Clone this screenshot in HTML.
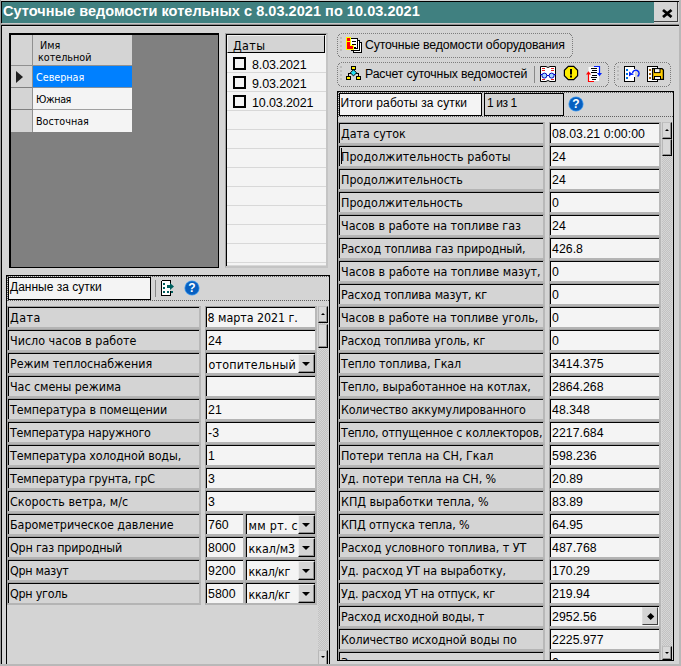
<!DOCTYPE html>
<html lang="ru"><head><meta charset="utf-8"><title>Суточные ведомости котельных</title>
<style>
html,body{margin:0;padding:0;background:#d4d4d4;}
body{width:681px;height:666px;overflow:hidden;}
#win{position:relative;width:681px;height:666px;overflow:hidden;background:#d4d4d4;font-family:"Liberation Sans",sans-serif;font-size:12px;color:#000;}
#win div,#win i,#win b,#win span,#win svg{position:absolute;box-sizing:border-box;}
#win span{white-space:nowrap;}
.ln{background:#000;}
/* title */
#title{left:2px;top:2px;width:652px;height:21px;background:#408080;}
#title span{left:1px;top:1px;font-weight:bold;font-size:14.5px;letter-spacing:0.04px;color:#fff;line-height:17px;}
#close{left:654px;top:2px;width:24px;height:20px;background:#d4d4d4;border-right:1px solid #404040;border-bottom:1px solid #404040;}
/* grid */
#grid{left:9px;top:33px;width:210px;height:235px;background:#808080;border:1px solid #000;border-left-width:2px;border-top-width:2px;}
.gh{background:#d4d4d4;}
.gc{background:#f4f4f4;}
.gc span,.gh span{font-family:"DejaVu Sans Condensed","Liberation Sans",sans-serif;font-size:10.7px;line-height:13px;}
/* dates list */
#dhead{background:#d4d4d4;border-top:1px solid #f0f0f0;border-left:1px solid #f0f0f0;border-right:1px solid #000;border-bottom:1px solid #000;}
#dhead span{left:5px;top:2px;letter-spacing:0.4px;font-family:"DejaVu Sans Condensed","Liberation Sans",sans-serif;font-size:12.4px;line-height:15px;}
.drow{border-bottom:1px solid #d8d8d8;}
.drow span{left:25px;top:4px;font-size:12.5px;letter-spacing:-0.12px;line-height:15px;}
.cb{left:6px;top:3px;width:13px;height:13px;border:2px solid #000;background:#f4f4f4;}
/* label / value cells */
.lab{height:23px;background:#d4d4d4;border-top:1px solid #a0a0a0;border-left:1px solid #a0a0a0;border-bottom:2px solid #b4b4b4;border-right:2px solid #b8b8b8;box-shadow:inset 1px 1px 0 #000;}
.lab span{left:2px;top:3px;line-height:15px;font-family:"DejaVu Sans Condensed","Liberation Sans",sans-serif;font-size:12.4px;}
.val{height:23px;background:#f4f4f4;border-top:1px solid #a0a0a0;border-left:1px solid #a0a0a0;border-bottom:2px solid #b4b4b4;border-right:2px solid #b8b8b8;box-shadow:inset 1px 1px 0 #000;}
.val span{left:2px;top:4px;line-height:15px;font-size:12.3px;letter-spacing:0.04px;}
.val span.c{top:4px;left:3px;letter-spacing:0;font-family:"DejaVu Sans Condensed","Liberation Sans",sans-serif;font-size:12.4px;}
.dd{right:0;top:1px;bottom:0;width:17px;background:#d4d4d4;border-top:1px solid #ececec;border-left:1px solid #ececec;border-right:1px solid #000;border-bottom:1px solid #000;box-shadow:inset -1px -1px 0 #909090;}
.dd b{left:3px;top:6.5px;width:0;height:0;border-left:4px solid transparent;border-right:4px solid transparent;border-top:4.5px solid #000;}
.dia{right:1px;top:1px;width:16px;height:18px;background:#d4d4d4;border-top:1px solid #dcdcdc;border-left:1px solid #dcdcdc;border-right:1px solid #404040;border-bottom:1px solid #404040;}
.dia b{left:4.7px;top:5.8px;width:5.4px;height:5.4px;background:#000;transform:rotate(45deg);}
/* toolbars */
.tb{border:1px dotted #a0a0a0;}
.tbt{font-size:12.3px;line-height:15px;letter-spacing:-0.15px;}
/* scrollbars */
.sb{background:repeating-conic-gradient(#c2c2c2 0% 25%,#d6d6d6 0% 50%) 0 0/2px 2px;}
.sbtn{background:#d8d8d8;border-top:1px solid #c0c0c0;border-left:1px solid #b8b8b8;border-right:1px solid #000;border-bottom:1px solid #000;box-shadow:inset -1px -1px 0 #909090;}
.sbtn b{left:2px;width:0;height:0;border-left:2px solid transparent;border-right:2px solid transparent;}
.sbtn b.up{top:6px;border-bottom:2.5px solid #000;}
.sbtn b.dn{top:6px;border-top:2.5px solid #000;}
.tx{height:23px;background:#f4f4f4;border:1px solid #000;}
.tx span{left:1px;top:2px;line-height:15px;font-size:12px;}
.val span.d{left:1.5px;top:3px;letter-spacing:-0.05px;}

</style></head><body>
<div id="win">
<!-- outer frame -->
<div class="ln" style="left:0;top:0;width:1px;height:666px;background:#a0a0a0"></div>
<div class="ln" style="left:1px;top:1px;width:678px;height:1px"></div>
<div class="ln" style="left:1px;top:1px;width:1px;height:663px"></div>
<div class="ln" style="left:2px;top:23px;width:677px;height:1px;background:#c8c8c8"></div>
<div class="ln" style="left:1px;top:23px;width:1px;height:2px;background:#a0a0a0"></div>
<div class="ln" style="left:2px;top:24px;width:677px;height:1px;background:#909090"></div>
<div class="ln" style="left:2px;top:26px;width:677px;height:1px;background:#dedede"></div>
<div class="ln" style="left:2px;top:25px;width:677px;height:1px"></div>
<div class="ln" style="left:679px;top:0;width:2px;height:666px;background:#b8b8b8"></div>
<div class="ln" style="left:0;top:664px;width:681px;height:2px;background:#b8b8b8"></div>
<div id="title"><span>Суточные ведомости котельных с 8.03.2021 по 10.03.2021</span></div>
<div id="close"><svg style="left:7px;top:6px" width="13" height="10" viewBox="0 0 13 10"><path d="M2 2 L10.500 9 M10.500 2 L2 9" stroke="#000" stroke-width="2.800" fill="none"/></svg></div>

<!-- left inner frame -->
<div class="ln" style="left:6px;top:275px;width:1px;height:389px"></div>
<div class="ln" style="left:6px;top:275px;width:324px;height:1px"></div>
<div class="ln" style="left:329px;top:275px;width:1px;height:389px"></div>

<!-- grid -->
<div id="grid">
 <div class="gh" style="left:0;top:0;width:22px;height:31px;border-right:1px solid #909090;border-bottom:1px solid #909090"></div>
 <div class="gh" style="left:22px;top:0;width:99px;height:31px;border-bottom:1px solid #909090"><span style="left:7px;top:4px">Имя</span><span style="left:5px;top:16px">котельной</span></div>
 <div class="gh" style="left:0;top:31px;width:22px;height:22px;border-right:1px solid #909090;border-bottom:1px solid #808080"><b style="left:5px;top:5px;width:0;height:0;border-top:6px solid transparent;border-bottom:6px solid transparent;border-left:7px solid #202020"></b></div>
 <div class="gc" style="left:22px;top:31px;width:99px;height:22px;background:#0080ff;border-bottom:1px solid #8090a0"><span style="left:3px;top:5px;color:#fff">Северная</span></div>
 <div class="gh" style="left:0;top:53px;width:22px;height:22px;border-right:1px solid #909090;border-bottom:1px solid #808080"></div>
 <div class="gc" style="left:22px;top:53px;width:99px;height:22px;border-bottom:1px solid #a0a0a0"><span style="left:3px;top:5px;letter-spacing:-0.4px">Южная</span></div>
 <div class="gh" style="left:0;top:75px;width:22px;height:22px;border-right:1px solid #909090;"></div>
 <div class="gc" style="left:22px;top:75px;width:99px;height:22px;"><span style="left:3px;top:5px">Восточная</span></div>
</div>

<!-- dates -->
<div style="left:225px;top:33px;width:103px;height:235px;background:#f4f4f4;border-left:1px solid #a0a0a0;border-top:1px solid #a0a0a0;border-right:2px solid #c4c4c4;border-bottom:2px solid #c4c4c4"></div>
<div class="ln" style="left:226px;top:34px;width:100px;height:1px"></div>
<div class="ln" style="left:226px;top:34px;width:1px;height:232px"></div>
<div id="dhead" style="left:227px;top:35px;width:98px;height:18px"><span>Даты</span></div>
<div class="drow" style="left:227px;top:54px;width:99px;height:19px"><i class="cb"></i><span>8.03.2021</span></div>
<div class="drow" style="left:227px;top:73px;width:99px;height:19px"><i class="cb"></i><span>9.03.2021</span></div>
<div class="drow" style="left:227px;top:92px;width:99px;height:19px"><i class="cb"></i><span>10.03.2021</span></div>
<div class="drow" style="left:227px;top:111px;width:99px;height:19px"></div>
<div class="drow" style="left:227px;top:130px;width:99px;height:19px"></div>
<div class="drow" style="left:227px;top:149px;width:99px;height:19px"></div>
<div class="drow" style="left:227px;top:168px;width:99px;height:19px"></div>
<div class="drow" style="left:227px;top:187px;width:99px;height:19px"></div>
<div class="drow" style="left:227px;top:206px;width:99px;height:19px"></div>
<div class="drow" style="left:227px;top:225px;width:99px;height:19px"></div>
<div class="drow" style="left:227px;top:244px;width:99px;height:19px"></div>
<div class="drow" style="left:227px;top:263px;width:99px;height:3px"></div>

<!-- left toolbar strip -->
<div class="tb" style="left:7px;top:276px;width:322px;height:25px;border-color:#606060;border-right:none"></div>
<div class="tx" style="left:8px;top:277px;width:143px;"><span>Данные за сутки</span></div>
<div class="ln" style="left:155px;top:280px;width:1px;height:17px;background:#888"></div>
<svg style="left:160px;top:280px" width="16" height="16" viewBox="0 0 16 16" shape-rendering="crispEdges"><path d="M1.5 0.5h9v5M10.5 11v4.500h-9v-15" fill="#fff" stroke="#000"/><rect x="2" y="1" width="8" height="14" fill="#fff"/><g fill="#006060"><rect x="3" y="3" width="2" height="2"/><rect x="3" y="7" width="2" height="2"/><rect x="3" y="11" width="2" height="2"/><rect x="7" y="11" width="2" height="2"/><rect x="11" y="11" width="2" height="2"/><rect x="7" y="5" width="4" height="3"/><path d="M10 3l4 3.500-4 3.500z" shape-rendering="geometricPrecision"/></g></svg>
<svg style="left:184px;top:280px" width="16" height="16" viewBox="0 0 16 16"><circle cx="8" cy="8" r="7.6" fill="#4aa0f0"/><circle cx="8" cy="8" r="6.8" fill="#0860c0"/><text x="8" y="12.3" text-anchor="middle" font-family="Liberation Sans,sans-serif" font-weight="bold" font-size="12" fill="#fff">?</text></svg>

<!-- right toolbars -->
<svg style="left:337px;top:33px" width="236" height="25" viewBox="0 0 236 25" shape-rendering="crispEdges"><path d="M4 0.500H233M4 24.5H233M0.500 4V22M235.5 4V22" fill="none" stroke="#7c7c7c" stroke-dasharray="1 1"/><g fill="#7c7c7c"><rect x="2" y="1" width="1" height="1"/><rect x="1" y="2" width="1" height="1"/><rect x="233" y="1" width="1" height="1"/><rect x="234" y="2" width="1" height="1"/><rect x="2" y="23" width="1" height="1"/><rect x="1" y="22" width="1" height="1"/><rect x="233" y="23" width="1" height="1"/><rect x="234" y="22" width="1" height="1"/></g><g fill="#bcbcbc"><rect x="3" y="4" width="2" height="2"/><rect x="3" y="8" width="2" height="2"/><rect x="3" y="12" width="2" height="2"/><rect x="3" y="16" width="2" height="2"/></g></svg>
<svg style="left:346px;top:37px" width="16" height="16" viewBox="0 0 16 16" shape-rendering="crispEdges"><rect x="7.500" y="5.500" width="8" height="10" fill="#fff" stroke="#000"/><rect x="5.500" y="3.500" width="8" height="10" fill="#fff" stroke="#000"/><rect x="3.500" y="1.500" width="8" height="10" fill="#fff" stroke="#000"/><path d="M6 4h4M6 7h4M8 10h2" stroke="#000"/><path d="M0 0h5v8h3v5h-8z" fill="#ffff00"/><path d="M1 1h3v3h-3zM1 5h3v4h3v3h-6z" fill="#ff0000"/></svg>
<span class="tbt" style="left:365px;top:38px">Суточные ведомости оборудования</span>
<svg style="left:337px;top:62px" width="272" height="25" viewBox="0 0 272 25" shape-rendering="crispEdges"><path d="M4 0.500H269M4 24.5H269M0.500 4V22M271.5 4V22" fill="none" stroke="#7c7c7c" stroke-dasharray="1 1"/><g fill="#7c7c7c"><rect x="2" y="1" width="1" height="1"/><rect x="1" y="2" width="1" height="1"/><rect x="269" y="1" width="1" height="1"/><rect x="270" y="2" width="1" height="1"/><rect x="2" y="23" width="1" height="1"/><rect x="1" y="22" width="1" height="1"/><rect x="269" y="23" width="1" height="1"/><rect x="270" y="22" width="1" height="1"/></g><g fill="#bcbcbc"><rect x="3" y="4" width="2" height="2"/><rect x="3" y="8" width="2" height="2"/><rect x="3" y="12" width="2" height="2"/><rect x="3" y="16" width="2" height="2"/></g></svg>
<svg style="left:346px;top:65px" width="16" height="16" viewBox="0 0 16 16"><path d="M7.500 4v2M2.500 11V8.500H5M12.500 11V8.500H10" fill="none" stroke="#000" shape-rendering="crispEdges"/><path d="M7.500 4.700L10.600 7.800 7.500 10.900 4.400 7.800Z" fill="#20e0f8" stroke="#000"/><g fill="#ffee00" stroke="#000" shape-rendering="crispEdges"><rect x="5.500" y="1.500" width="4" height="3"/><rect x="0.500" y="11.500" width="4" height="3"/><rect x="10.500" y="11.500" width="4" height="3"/></g></svg>
<span class="tbt" style="left:365px;top:67px">Расчет суточных ведомостей</span>
<div class="ln" style="left:534px;top:66px;width:1px;height:17px;background:#888"></div>
<svg style="left:540px;top:66px" width="16" height="16" viewBox="0 0 16 16"><path d="M0.500 0.500h5.500l2 1 2-1h5.500v15h-5.500l-2-1-2 1h-5.500z" fill="#fff" stroke="#000"/><path d="M2 2.500h3M2 4.500h3M11 2.500h3M11 4.500h3M2 13.500h3M11 13.500h3" stroke="#e02020"/><path d="M0 8.500h2M14 8.500h2M6.500 9.500h3" stroke="#0000c0"/><circle cx="4.400" cy="9.600" r="2.500" fill="#a0d8ff" stroke="#0000c0"/><circle cx="11.600" cy="9.600" r="2.500" fill="#a0d8ff" stroke="#0000c0"/></svg>
<svg style="left:563px;top:65px" width="16" height="16" viewBox="0 0 16 16"><path d="M5.300 1.400h5.400l3.900 3.900v5.400l-3.900 3.900h-5.400l-3.900-3.900v-5.400z" fill="#ffee00" stroke="#000" stroke-width="1.200"/><rect x="7" y="4" width="2" height="5.500" fill="#000"/><rect x="7" y="10.500" width="2" height="2" fill="#000"/></svg>
<svg style="left:586px;top:66px" width="16" height="16" viewBox="0 0 16 16"><rect x="2.500" y="1" width="10.500" height="14" fill="#fcfcfc"/><path d="M5 2.500h6M6 4.500h5M5 6.500h6M6 9h5M5 11h6M6 13h4" stroke="#000" shape-rendering="crispEdges"/><path d="M8 0.500h5.500v7" fill="none" stroke="#0020ff" stroke-width="1.200"/><path d="M11 7h5l-2.500 3.300z" fill="#0020ff"/><path d="M8 15.500H2.500v-8" fill="none" stroke="#ff0000" stroke-width="1.200"/><path d="M0 8.500h5L2.500 5.200z" fill="#ff0000"/></svg>
<svg style="left:614px;top:62px" width="57" height="25" viewBox="0 0 57 25" shape-rendering="crispEdges"><path d="M4 0.500H54M4 24.5H54M0.500 4V22M56.5 4V22" fill="none" stroke="#7c7c7c" stroke-dasharray="1 1"/><g fill="#7c7c7c"><rect x="2" y="1" width="1" height="1"/><rect x="1" y="2" width="1" height="1"/><rect x="54" y="1" width="1" height="1"/><rect x="55" y="2" width="1" height="1"/><rect x="2" y="23" width="1" height="1"/><rect x="1" y="22" width="1" height="1"/><rect x="54" y="23" width="1" height="1"/><rect x="55" y="22" width="1" height="1"/></g><g fill="#bcbcbc"><rect x="3" y="4" width="2" height="2"/><rect x="3" y="8" width="2" height="2"/><rect x="3" y="12" width="2" height="2"/><rect x="3" y="16" width="2" height="2"/></g></svg>
<svg style="left:624px;top:66px" width="18" height="16" viewBox="0 0 18 16"><path d="M10.500 3V0.500h-10v15h10V11" fill="#fff" stroke="#000" shape-rendering="crispEdges"/><rect x="1" y="1" width="9" height="14" fill="#fff"/><g fill="#0070e0" shape-rendering="crispEdges"><rect x="2" y="3" width="2" height="2"/><rect x="2" y="7" width="2" height="2"/><rect x="2" y="11" width="2" height="2"/></g><path d="M8.500 7.500A3.300 3.300 0 1 1 13.500 10.300" fill="none" stroke="#0020ff" stroke-width="1.400"/><path d="M5 10.500V5.500l5 3.200-3 0.300z" fill="#0020ff"/></svg>
<svg style="left:647px;top:66px" width="18" height="16" viewBox="0 0 18 16"><path d="M0.500 0.500h10v15h-10z" fill="#fff" stroke="#000" shape-rendering="crispEdges"/><g fill="#a06010" shape-rendering="crispEdges"><rect x="2" y="3" width="2" height="2"/><rect x="2" y="7" width="2" height="2"/><rect x="2" y="11" width="2" height="2"/></g><path d="M5.600 2.600h9.400l1.400 1.400v9.400h-10.800z" fill="#ffcc00" stroke="#000" stroke-width="1.300"/><rect x="7.500" y="2.600" width="5.500" height="4" fill="#f4f4f4" stroke="#000"/><rect x="7.500" y="10.500" width="6" height="3" fill="#f4f4f4" stroke="#000"/></svg>

<!-- right panel frame -->
<div class="ln" style="left:337px;top:91px;width:337px;height:1px"></div>
<div class="tb" style="left:338px;top:92px;width:335px;height:25px;border-color:#606060;border-right:none"></div>
<div class="ln" style="left:337px;top:91px;width:1px;height:570px"></div>
<div class="ln" style="left:673px;top:91px;width:1px;height:570px"></div>
<div class="tx" style="left:339px;top:93px;width:143px;"><span style="left:0.5px;letter-spacing:0.12px">Итоги работы за сутки</span></div>
<div class="tx" style="left:484px;top:93px;width:80px;background:#d4d4d4"><span style="left:2px;letter-spacing:-0.4px">1 из 1</span></div>
<svg style="left:568px;top:96px" width="16" height="16" viewBox="0 0 16 16"><circle cx="8" cy="8" r="7.6" fill="#4aa0f0"/><circle cx="8" cy="8" r="6.8" fill="#0860c0"/><text x="8" y="12.3" text-anchor="middle" font-family="Liberation Sans,sans-serif" font-weight="bold" font-size="12" fill="#fff">?</text></svg>
<div id="lrows" style="left:0;top:0">
<div class="lab" style="left:7px;top:306px;width:194px"><span style="letter-spacing:0.45px">Дата</span></div>
<div class="val" style="left:205px;top:306px;width:112px"><span class="c d">8 марта 2021 г.</span></div>
<div class="lab" style="left:7px;top:329px;width:194px"><span style="letter-spacing:0.02px">Число часов в работе</span></div>
<div class="val" style="left:205px;top:329px;width:112px"><span>24</span></div>
<div class="lab" style="left:7px;top:352px;width:194px"><span style="letter-spacing:-0.03px">Режим теплоснабжения</span></div>
<div class="val" style="left:205px;top:352px;width:112px"><span class="c" style="letter-spacing:0.2px;left:2.5px">отопительный</span><i class="dd"><b></b></i></div>
<div class="lab" style="left:7px;top:375px;width:194px"><span style="letter-spacing:-0.037px">Час смены режима</span></div>
<div class="val" style="left:205px;top:375px;width:112px"><span></span></div>
<div class="lab" style="left:7px;top:398px;width:194px"><span style="letter-spacing:-0.096px">Температура в помещении</span></div>
<div class="val" style="left:205px;top:398px;width:112px"><span>21</span></div>
<div class="lab" style="left:7px;top:421px;width:194px"><span style="letter-spacing:-0.219px">Температура наружного</span></div>
<div class="val" style="left:205px;top:421px;width:112px"><span>-3</span></div>
<div class="lab" style="left:7px;top:444px;width:194px"><span style="letter-spacing:-0.115px">Температура холодной воды,</span></div>
<div class="val" style="left:205px;top:444px;width:112px"><span>1</span></div>
<div class="lab" style="left:7px;top:467px;width:194px"><span style="letter-spacing:-0.166px">Температура грунта, грС</span></div>
<div class="val" style="left:205px;top:467px;width:112px"><span>3</span></div>
<div class="lab" style="left:7px;top:490px;width:194px"><span style="letter-spacing:0.053px">Скорость ветра, м/с</span></div>
<div class="val" style="left:205px;top:490px;width:112px"><span>3</span></div>
<div class="lab" style="left:7px;top:513px;width:194px"><span style="letter-spacing:-0.042px">Барометрическое давление</span></div>
<div class="val" style="left:205px;top:513px;width:40px"><span>760</span></div>
<div class="val" style="left:245px;top:513px;width:72px"><span class="c" style="letter-spacing:0.3px;left:2.5px">мм рт. с</span><i class="dd"><b></b></i></div>
<div class="lab" style="left:7px;top:536px;width:194px"><span style="letter-spacing:-0.2px">Qрн газ природный</span></div>
<div class="val" style="left:205px;top:536px;width:40px"><span>8000</span></div>
<div class="val" style="left:245px;top:536px;width:72px"><span class="c" style="letter-spacing:0px;left:2.5px">ккал/м3</span><i class="dd"><b></b></i></div>
<div class="lab" style="left:7px;top:559px;width:194px"><span style="letter-spacing:-0.266px">Qрн мазут</span></div>
<div class="val" style="left:205px;top:559px;width:40px"><span>9200</span></div>
<div class="val" style="left:245px;top:559px;width:72px"><span class="c" style="letter-spacing:-0.34px;left:2.5px">ккал/кг</span><i class="dd"><b></b></i></div>
<div class="lab" style="left:7px;top:582px;width:194px"><span style="letter-spacing:-0.244px">Qрн уголь</span></div>
<div class="val" style="left:205px;top:582px;width:40px"><span>5800</span></div>
<div class="val" style="left:245px;top:582px;width:72px"><span class="c" style="letter-spacing:-0.34px;left:2.5px">ккал/кг</span><i class="dd"><b></b></i></div>
</div>
<div id="rrows" style="left:0;top:0">
<div class="lab" style="left:338px;top:122px;width:207px"><span style="letter-spacing:-0.04px">Дата суток</span></div>
<div class="val" style="left:549px;top:122px;width:112px"><span>08.03.21 0:00:00</span></div>
<div class="lab" style="left:338px;top:145px;width:207px"><span style="letter-spacing:0.067px">Продолжительность работы</span></div>
<div class="val" style="left:549px;top:145px;width:112px"><span>24</span></div>
<div class="lab" style="left:338px;top:168px;width:207px"><span style="letter-spacing:0.023px">Продолжительность</span></div>
<div class="val" style="left:549px;top:168px;width:112px"><span>24</span></div>
<div class="lab" style="left:338px;top:191px;width:207px"><span style="letter-spacing:0.023px">Продолжительность</span></div>
<div class="val" style="left:549px;top:191px;width:112px"><span>0</span></div>
<div class="lab" style="left:338px;top:214px;width:207px"><span style="letter-spacing:-0.014px">Часов в работе на топливе газ</span></div>
<div class="val" style="left:549px;top:214px;width:112px"><span>24</span></div>
<div class="lab" style="left:338px;top:237px;width:207px"><span style="letter-spacing:-0.138px">Расход топлива газ природный,</span></div>
<div class="val" style="left:549px;top:237px;width:112px"><span>426.8</span></div>
<div class="lab" style="left:338px;top:260px;width:207px"><span style="letter-spacing:-0.0px">Часов в работе на топливе мазут,</span></div>
<div class="val" style="left:549px;top:260px;width:112px"><span>0</span></div>
<div class="lab" style="left:338px;top:283px;width:207px"><span style="letter-spacing:-0.175px">Расход топлива мазут, кг</span></div>
<div class="val" style="left:549px;top:283px;width:112px"><span>0</span></div>
<div class="lab" style="left:338px;top:306px;width:207px"><span style="letter-spacing:-0.031px">Часов в работе на топливе уголь,</span></div>
<div class="val" style="left:549px;top:306px;width:112px"><span>0</span></div>
<div class="lab" style="left:338px;top:329px;width:207px"><span style="letter-spacing:-0.2px">Расход топлива уголь, кг</span></div>
<div class="val" style="left:549px;top:329px;width:112px"><span>0</span></div>
<div class="lab" style="left:338px;top:352px;width:207px"><span style="letter-spacing:-0.063px">Тепло топлива, Гкал</span></div>
<div class="val" style="left:549px;top:352px;width:112px"><span>3414.375</span></div>
<div class="lab" style="left:338px;top:375px;width:207px"><span style="letter-spacing:-0.073px">Тепло, выработанное на котлах,</span></div>
<div class="val" style="left:549px;top:375px;width:112px"><span>2864.268</span></div>
<div class="lab" style="left:338px;top:398px;width:207px"><span style="letter-spacing:-0.179px">Количество аккумулированного</span></div>
<div class="val" style="left:549px;top:398px;width:112px"><span>48.348</span></div>
<div class="lab" style="left:338px;top:421px;width:207px"><span style="letter-spacing:-0.17px">Тепло, отпущенное с коллекторов,</span></div>
<div class="val" style="left:549px;top:421px;width:112px"><span>2217.684</span></div>
<div class="lab" style="left:338px;top:444px;width:207px"><span style="letter-spacing:-0.026px">Потери тепла на СН, Гкал</span></div>
<div class="val" style="left:549px;top:444px;width:112px"><span>598.236</span></div>
<div class="lab" style="left:338px;top:467px;width:207px"><span style="letter-spacing:-0.056px">Уд. потери тепла на СН, %</span></div>
<div class="val" style="left:549px;top:467px;width:112px"><span>20.89</span></div>
<div class="lab" style="left:338px;top:490px;width:207px"><span style="letter-spacing:-0.01px">КПД выработки тепла, %</span></div>
<div class="val" style="left:549px;top:490px;width:112px"><span>83.89</span></div>
<div class="lab" style="left:338px;top:513px;width:207px"><span style="letter-spacing:-0.14px">КПД отпуска тепла, %</span></div>
<div class="val" style="left:549px;top:513px;width:112px"><span>64.95</span></div>
<div class="lab" style="left:338px;top:536px;width:207px"><span style="letter-spacing:-0.06px">Расход условного топлива, т УТ</span></div>
<div class="val" style="left:549px;top:536px;width:112px"><span>487.768</span></div>
<div class="lab" style="left:338px;top:559px;width:207px"><span style="letter-spacing:-0.096px">Уд. расход УТ на выработку,</span></div>
<div class="val" style="left:549px;top:559px;width:112px"><span>170.29</span></div>
<div class="lab" style="left:338px;top:582px;width:207px"><span style="letter-spacing:-0.259px">Уд. расход УТ на отпуск, кг</span></div>
<div class="val" style="left:549px;top:582px;width:112px"><span>219.94</span></div>
<div class="lab" style="left:338px;top:605px;width:207px"><span style="letter-spacing:-0.174px">Расход исходной воды, т</span></div>
<div class="val" style="left:549px;top:605px;width:112px"><span>2952.56</span><i class="dia"><b></b></i></div>
<div class="lab" style="left:338px;top:628px;width:207px"><span style="letter-spacing:-0.126px">Количество исходной воды по</span></div>
<div class="val" style="left:549px;top:628px;width:112px"><span>2225.977</span></div>
<div class="lab" style="left:338px;top:651px;width:207px"><span style="letter-spacing:0px">Затраты на нужды</span></div>
<div class="val" style="left:549px;top:651px;width:112px"><span>0</span></div>
</div>
<!-- left scrollbar -->
<div class="sb" style="left:318px;top:306px;width:10px;height:358px"></div>
<div class="sbtn" style="left:318px;top:306px;width:10px;height:17px"><b class="up"></b></div>
<div class="sbtn" style="left:318px;top:324px;width:10px;height:24px"></div>
<div class="sbtn" style="left:318px;top:650px;width:10px;height:16px"><b class="dn" style="top:5px"></b></div>
<!-- right scrollbar -->
<div class="sb" style="left:662px;top:122px;width:10px;height:539px"></div>
<div class="sbtn" style="left:662px;top:122px;width:10px;height:17px"><b class="up"></b></div>
<div class="sbtn" style="left:662px;top:139px;width:10px;height:17px"></div>
<div class="sbtn" style="left:662px;top:646px;width:10px;height:14px"><b class="dn" style="top:5px"></b></div>
<!-- caret -->
<div class="ln" style="left:341px;top:148px;width:1px;height:16px"></div>
<!-- bottom covers -->
<div class="ln" style="left:337px;top:660px;width:337px;height:1px"></div>
<div class="ln" style="left:330px;top:661px;width:349px;height:3px;background:#d4d4d4"></div>
<div class="ln" style="left:329px;top:661px;width:1px;height:3px"></div>
<div class="ln" style="left:0;top:664px;width:681px;height:2px;background:#b8b8b8"></div>
</div>
</body></html>
